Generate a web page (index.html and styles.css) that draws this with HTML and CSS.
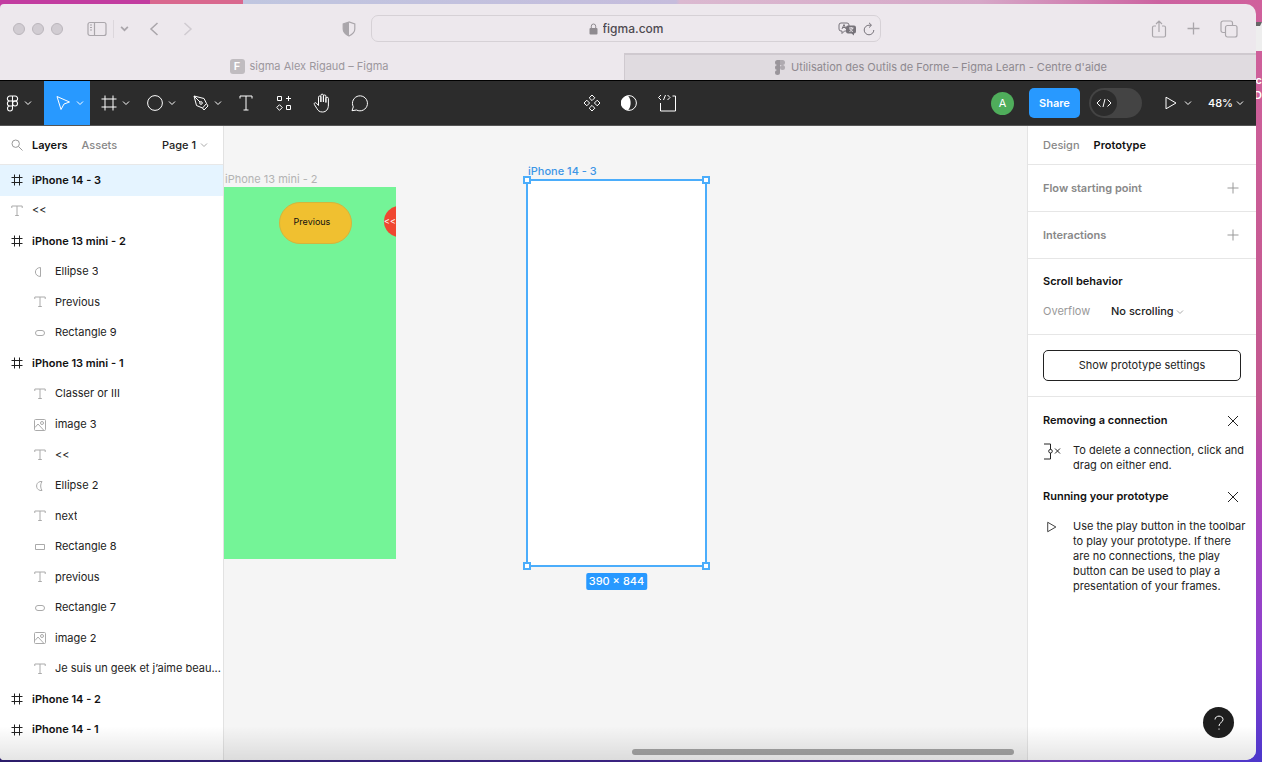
FILE: index.html
```html
<!DOCTYPE html>
<html lang="en">
<head>
<meta charset="utf-8">
<title>sigma Alex Rigaud – Figma</title>
<link rel="stylesheet" href="styles.css">
</head>
<body>
<svg class="sprite" aria-hidden="true">
  <symbol id="chev" viewBox="0 0 8 8"><path d="M1 2.5 4 5.5 7 2.5"/></symbol>
  <symbol id="hash" viewBox="0 0 12 12"><path d="M3.5.5v11M8.5.5v11M.5 3.5h11M.5 8.5h11"/></symbol>
  <symbol id="tee" viewBox="0 0 12 12"><path d="M.8 3V1h10.4v2M6 1v9.5M4.2 10.5h3.6"/></symbol>
  <symbol id="half" viewBox="0 0 12 12"><path d="M6.500 1.500v9C-.3 10.300-.3 1.700 6.500 1.500z"/></symbol>
  <symbol id="moon" viewBox="0 0 12 12"><path d="M8 1.500C.8.800.8 11.200 8 10.500 6.200 7.500 6.200 4.500 8 1.500z"/></symbol>
  <symbol id="rect" viewBox="0 0 12 12"><path d="M1.500 3.500h9v5h-9z"/></symbol>
  <symbol id="round" viewBox="0 0 12 12"><rect x="1.500" y="3.500" width="9" height="5" rx="2.500"/></symbol>
  <symbol id="image" viewBox="0 0 12 12"><rect x=".5" y=".5" width="11" height="11" rx="1"/><circle cx="8" cy="4" r="1.500"/><path d="M1 8.500 4 5l6 6.500"/></symbol>
  <symbol id="plus" viewBox="0 0 12 12"><path d="M6 .5v11M.5 6h11"/></symbol>
  <symbol id="cross" viewBox="0 0 12 12"><path d="M1 1l10 10M11 1 1 11"/></symbol>
  <symbol id="figma" viewBox="0 0 12 16"><path d="M6 1H3.500a2.300 2.300 0 0 0 0 4.700H6zM6 1h2.500a2.300 2.300 0 0 1 0 4.700H6zM6 5.700H3.500a2.300 2.300 0 0 0 0 4.600H6zM3.500 10.300A2.350 2.350 0 1 0 6 12.700v-2.400z"/><circle cx="8.400" cy="8" r="2.300"/></symbol>
  <symbol id="play" viewBox="0 0 12 14"><path d="M1 1.200v11.600L11 7z"/></symbol>
</svg>

<div class="desktop-item" aria-hidden="true"><span class="thumb"></span><span>c</span><span>D</span></div>

<div class="window">
  <header class="titlebar">
    <div class="titlebar-left">
      <div class="lights"><i></i><i></i><i></i></div>
      <button class="bare side" aria-label="Sidebar"><svg width="20" height="16" viewBox="0 0 20 16"><rect x="1" y="1.500" width="18" height="13" rx="2"/><path d="M7.500 1.500v13M3 4h2M3 6.500h2M3 9h2"/></svg></button>
      <button class="bare drop" aria-label="Tab groups"><svg width="9" height="9"><use href="#chev"/></svg></button>
      <button class="bare back" aria-label="Back"><svg width="10" height="16" viewBox="0 0 10 16"><path d="M8.500 2 2 8l6.500 6"/></svg></button>
      <button class="bare fwd" aria-label="Forward"><svg width="10" height="16" viewBox="0 0 10 16"><path d="M1.500 2 8 8l-6.500 6"/></svg></button>
      <button class="bare shield" aria-label="Privacy report"><svg width="14" height="16" viewBox="0 0 14 16"><path d="M7 1 1.200 3v5c0 3.500 2.500 5.500 5.800 7 3.300-1.500 5.800-3.500 5.800-7V3z"/><path class="fill" d="M7 1 1.200 3v5c0 3.500 2.500 5.500 5.800 7z"/></svg></button>
    </div>
    <div class="address">
      <svg class="lock" width="9" height="12" viewBox="0 0 9 12"><rect class="fill" x=".5" y="5" width="8" height="6.500" rx="1"/><path d="M2.300 5V3.200a2.200 2.200 0 0 1 4.400 0V5"/></svg>
      <input class="url" aria-label="Address" value="figma.com">
      <div class="address-actions">
        <button class="bare" aria-label="Translate"><svg width="19" height="14" viewBox="0 0 19 14"><path d="M3 1h6a2 2 0 0 1 2 2v4a2 2 0 0 1-2 2H6.500L4 11.500V9H3a2 2 0 0 1-2-2V3a2 2 0 0 1 2-2zM4 7l2-4.500L8 7M4.700 5.500h2.600"/><path class="fill" d="M10 3.500h6a2 2 0 0 1 2 2v4a2 2 0 0 1-2 2v2l-2.500-2H10a2 2 0 0 1-2-2v-4a2 2 0 0 1 2-2z"/><path class="light" d="M11 6h4.500M13.200 5v1M14.500 6c-.5 2-1.500 3-3 3.500M11.800 7c.8 1.500 2 2.200 3.200 2.500"/></svg></button>
        <button class="bare" aria-label="Reload"><svg width="12" height="14" viewBox="0 0 12 14"><path d="M10.800 8A4.800 4.800 0 1 1 6 3.200h2M6 .8l2.500 2.400L6 5.600"/></svg></button>
      </div>
    </div>
    <div class="titlebar-right">
      <button class="bare" aria-label="Share page"><svg width="16" height="18" viewBox="0 0 16 18"><path d="M5 6H3a1.500 1.500 0 0 0-1.500 1.500v8A1.500 1.500 0 0 0 3 17h10a1.500 1.500 0 0 0 1.500-1.500v-8A1.500 1.500 0 0 0 13 6h-2M8 12V1M5 4l3-3 3 3"/></svg></button>
      <button class="bare" aria-label="New tab"><svg width="13" height="13"><use href="#plus"/></svg></button>
      <button class="bare" aria-label="Tab overview"><svg width="18" height="18" viewBox="0 0 18 18"><rect x="5.500" y="5.500" width="11.500" height="11.500" rx="2"/><path d="M5.500 12.500H3a2 2 0 0 1-2-2V3a2 2 0 0 1 2-2h7.500a2 2 0 0 1 2 2v2.500"/></svg></button>
    </div>
  </header>
  <nav class="tabs" aria-label="Tabs">
    <a href="#" class="tab current"><span class="favicon">F</span>sigma Alex Rigaud – Figma</a>
    <a href="#" class="tab other"><svg class="tab-logo" width="12" height="15" viewBox="0 0 12 15"><path class="fill" d="M6 0H3.500a2.500 2.500 0 0 0 0 5H6zM6 5H3.500a2.500 2.500 0 0 0 0 5H6zM3.500 10A2.500 2.500 0 1 0 6 12.500V10z"/><path class="fill pale" d="M6 0h2.500a2.500 2.500 0 0 1 0 5H6z"/><circle class="fill pale" cx="8.500" cy="7.500" r="2.500"/></svg>Utilisation des Outils de Forme – Figma Learn - Centre d'aide</a>
  </nav>

  <div class="toolbar">
    <div class="tools">
      <button class="tool main" aria-label="Main menu"><svg width="13" height="17"><use href="#figma"/></svg><svg class="caret"><use href="#chev"/></svg></button>
      <button class="tool active" aria-label="Move"><svg width="16" height="16" viewBox="0 0 16 16"><path d="M2 1.500 14.500 7 9 9 6 14.500z"/></svg><svg class="caret"><use href="#chev"/></svg></button>
      <button class="tool" aria-label="Frame"><svg width="16" height="16" viewBox="0 0 16 16"><path d="M4 .5v15M12 .5v15M.5 4h15M.5 12h15"/></svg><svg class="caret"><use href="#chev"/></svg></button>
      <button class="tool" aria-label="Ellipse"><svg width="16" height="16" viewBox="0 0 16 16"><circle cx="8" cy="8" r="7.400"/></svg><svg class="caret"><use href="#chev"/></svg></button>
      <button class="tool" aria-label="Pen"><svg width="16" height="16" viewBox="0 0 16 16"><path d="M1 1l2.500 9.500 6 2.500 4-4.500L11 3.500zM1 1l6 6M9.500 13l1.500 2 4-4-1.500-2.500"/><circle cx="8" cy="8" r="1.300"/></svg><svg class="caret"><use href="#chev"/></svg></button>
      <button class="tool plain" aria-label="Text"><svg width="14" height="16" viewBox="0 0 14 16"><path d="M1 3.500V1h12v2.500M7 1v14M4.500 15h5"/></svg></button>
      <button class="tool plain" aria-label="Resources"><svg width="16" height="16" viewBox="0 0 16 16"><path d="M1.500 1.500h4v4h-4zM10.500 10.500h4v4h-4zM12.500 1v5M10 3.500h5M3.500 9.700l2.800 2.800-2.800 2.800L.7 12.500z"/></svg></button>
      <button class="tool plain" aria-label="Hand"><svg width="18" height="20" viewBox="0 0 18 20"><path d="M5.500 11V4.200a1.200 1.200 0 0 1 2.400 0V9M7.900 9V2.400a1.200 1.200 0 0 1 2.500 0V9M10.400 9V3.200a1.200 1.200 0 0 1 2.500 0V9.500M12.900 9.500V5.500a1.200 1.200 0 0 1 2.500 0V12c0 4-2 7-6 7-3 0-4.500-1.500-5.500-3.500L1.400 11.500c-.7-1.600 1-2.400 2-1.300L5.500 12.500V10"/></svg></button>
      <button class="tool plain" aria-label="Comment"><svg width="18" height="17" viewBox="0 0 18 17"><path d="M1 15.700 2.300 11.800A7.500 7.500 0 1 1 5.500 15z"/></svg></button>
    </div>
    <div class="tools-mid">
      <button class="bare" aria-label="Create component"><svg width="18" height="18" viewBox="0 0 18 18"><path d="M9 1l2.800 2.800L9 6.600 6.200 3.800zM9 11.400l2.800 2.800L9 17l-2.800-2.800zM3.800 6.200 6.600 9l-2.800 2.800L1 9zM14.200 6.200 17 9l-2.800 2.800L11.400 9z"/></svg></button>
      <button class="bare" aria-label="Use as mask"><svg width="16" height="16" viewBox="0 0 16 16"><circle cx="8" cy="8" r="7.400"/><path class="fill" d="M7 .8C10.500 4 10.500 12 7 15.200A7.200 7.200 0 0 1 7 .8z"/></svg></button>
      <button class="bare" aria-label="Dev resources"><svg width="20" height="18" viewBox="0 0 20 18"><path d="M4 1 1.500 3.500 4 6M6.500 6l2-5M10.500 1 13 3.500 10.500 6M3.500 9v8H18.500V2H15.500"/></svg></button>
    </div>
    <div class="tools-right">
      <span class="avatar">A</span>
      <button class="share">Share</button>
      <label class="devmode"><input type="checkbox" role="switch" aria-label="Dev Mode"><span class="knob"><svg width="16" height="10" viewBox="0 0 16 10"><path d="M4.500 1.500 1 5l3.500 3.500M7 9l2-8M11.500 1.500 15 5l-3.500 3.500"/></svg></span></label>
      <button class="bare present" aria-label="Present"><svg width="12" height="14"><use href="#play"/></svg><svg class="caret"><use href="#chev"/></svg></button>
      <button class="bare zoom">48%<svg class="caret"><use href="#chev"/></svg></button>
    </div>
  </div>

  <div class="workspace">
    <aside class="layers">
      <div class="layers-head">
        <button class="bare find" aria-label="Search"><svg width="12" height="12" viewBox="0 0 12 12"><circle cx="4.700" cy="4.700" r="3.700"/><path d="M7.500 7.500 11.500 11.500"/></svg></button>
        <button class="bare strong">Layers</button>
        <button class="bare muted">Assets</button>
        <button class="bare page">Page 1<svg class="caret"><use href="#chev"/></svg></button>
      </div>
      <ul class="layer-list">
        <li class="layer frame selected"><svg><use href="#hash"/></svg><span>iPhone 14 - 3</span></li>
        <li class="layer"><svg><use href="#tee"/></svg><span>&lt;&lt;</span></li>
        <li class="layer frame"><svg><use href="#hash"/></svg><span>iPhone 13 mini - 2</span></li>
        <li class="layer child"><svg><use href="#half"/></svg><span>Ellipse 3</span></li>
        <li class="layer child"><svg><use href="#tee"/></svg><span>Previous</span></li>
        <li class="layer child"><svg><use href="#round"/></svg><span>Rectangle 9</span></li>
        <li class="layer frame"><svg><use href="#hash"/></svg><span>iPhone 13 mini - 1</span></li>
        <li class="layer child"><svg><use href="#tee"/></svg><span>Classer or III</span></li>
        <li class="layer child"><svg><use href="#image"/></svg><span>image 3</span></li>
        <li class="layer child"><svg><use href="#tee"/></svg><span>&lt;&lt;</span></li>
        <li class="layer child"><svg><use href="#moon"/></svg><span>Ellipse 2</span></li>
        <li class="layer child"><svg><use href="#tee"/></svg><span>next</span></li>
        <li class="layer child"><svg><use href="#rect"/></svg><span>Rectangle 8</span></li>
        <li class="layer child"><svg><use href="#tee"/></svg><span>previous</span></li>
        <li class="layer child"><svg><use href="#round"/></svg><span>Rectangle 7</span></li>
        <li class="layer child"><svg><use href="#image"/></svg><span>image 2</span></li>
        <li class="layer child"><svg><use href="#tee"/></svg><span>Je suis un geek et j’aime beau...</span></li>
        <li class="layer frame"><svg><use href="#hash"/></svg><span>iPhone 14 - 2</span></li>
        <li class="layer frame"><svg><use href="#hash"/></svg><span>iPhone 14 - 1</span></li>
      </ul>
    </aside>

    <main class="canvas">
      <span class="art-name art-name-mini">iPhone 13 mini - 2</span>
      <div class="art art-mini">
        <div class="pill">Previous</div>
        <div class="dot">&lt;&lt;</div>
      </div>
      <span class="art-name art-name-selected">iPhone 14 - 3</span>
      <div class="art art-selected"><i class="h tl"></i><i class="h tr"></i><i class="h bl"></i><i class="h br"></i><span class="size">390 × 844</span></div>
      <div class="scroll"></div>
    </main>

    <aside class="props">
      <div class="props-tabs"><button class="bare muted">Design</button><button class="bare strong">Prototype</button></div>
      <section class="row"><h2>Flow starting point</h2><button class="bare" aria-label="Add flow starting point"><svg width="12" height="12"><use href="#plus"/></svg></button></section>
      <section class="row"><h2>Interactions</h2><button class="bare" aria-label="Add interaction"><svg width="12" height="12"><use href="#plus"/></svg></button></section>
      <section class="behavior">
        <h2 class="dark">Scroll behavior</h2>
        <div class="field"><label for="overflow">Overflow</label><select id="overflow"><option>No scrolling</option></select><svg class="caret"><use href="#chev"/></svg></div>
      </section>
      <section class="settings"><button class="outline">Show prototype settings</button></section>
      <section class="tips">
        <div class="tip-head"><h2 class="dark">Removing a connection</h2><button class="bare" aria-label="Dismiss"><svg width="12" height="12"><use href="#cross"/></svg></button></div>
        <div class="tip"><svg width="18" height="17" viewBox="0 0 18 17"><path d="M1 1h6.500v5.500M7.500 10v6H1M12 5.500l5 5M17 5.500l-5 5"/><circle cx="7.500" cy="8.200" r="1.800"/></svg><p>To delete a connection, click and drag on either end.</p></div>
        <div class="tip-head"><h2 class="dark">Running your prototype</h2><button class="bare" aria-label="Dismiss"><svg width="12" height="12"><use href="#cross"/></svg></button></div>
        <div class="tip"><svg class="tip-play" width="18" height="12" viewBox="-2 0 18 14"><path d="M2 1.500v11L11.500 7z"/></svg><p>Use the play button in the toolbar to play your prototype. If there are no connections, the play button can be used to play a presentation of your frames.</p></div>
      </section>
    </aside>
    <div class="shade"></div>
    <button class="help" aria-label="Help"><svg width="12" height="16" viewBox="0 0 12 16"><path d="M2 4.500C2 0 10 0 10 4.500 10 7.500 6 7.500 6 11M6 13.500v1.200"/></svg></button>
  </div>
</div>
</body>
</html>
```
FILE: styles.css
```css
* { box-sizing: border-box; }

body {
  margin: 0;
  height: 100vh;
  padding: 4px 6px 2px 0;
  overflow: hidden;
  font: 11px/15px Inter, "Liberation Sans", sans-serif;
  color: #222;
  background:
    linear-gradient(90deg, #c23ca0 0 150px, #d9688e 150px 243px, #c0c6e0 243px, #c5bcdc 676px, #dbb9d0 680px, #d6a8c8 980px, #cc62a0 1160px, #d0609c) top / 100% 12px no-repeat,
    linear-gradient(90deg, #2b1c6a, #3a2380 50%, #6c3bb0 85%, #4d37cc) bottom / 100% 12px no-repeat,
    linear-gradient(#d0609c, #c3588f 400px, #b94aa6 450px, #a943bd 520px, #8a40d0 660px, #4d37cc);
}

button, input, select { font: inherit; color: inherit; margin: 0; }
svg { fill: none; stroke: currentColor; flex: none; display: block; }
.fill { fill: currentColor; stroke: none; }
.sprite { position: absolute; width: 0; height: 0; }
.caret { width: 8px; height: 8px; }
.bare { display: flex; align-items: center; padding: 0; border: 0; background: none; }
.strong { font-weight: 600; color: #111; }
.muted { font-weight: 500; color: #888; }

.desktop-item {
  position: absolute;
  top: 22px;
  right: 0;
  width: 8px;
  display: flex;
  flex-direction: column;
  align-items: flex-end;
  color: #fff;
  font-weight: 600;
}
.thumb { width: 8px; height: 29px; margin-bottom: 22px; background: #eee; border: solid #eee; border-width: 4px 2px; border-top-color: #666; }

.window {
  position: relative;
  height: 100%;
  display: flex;
  flex-direction: column;
  overflow: hidden;
  border-radius: 4px 10px 10px 4px;
  background: #ede8ed;
}

.titlebar {
  flex: none;
  display: grid;
  grid-template-columns: 1fr minmax(0, 510px) 1fr;
  align-items: center;
  height: 49px;
  padding-right: 4px;
  color: #aaa6ab;
}
.titlebar svg { stroke-width: 1.5; }
.titlebar-left { display: flex; align-items: center; padding: 0 15px 0 13px; }
.titlebar-left .bare, .titlebar-right .bare { color: #aaa6ab; }
.lights { display: flex; gap: 7px; }
.lights i { width: 12px; height: 12px; border-radius: 50%; background: #d1ccd2; border: 1px solid #bbb6bc; }
.side { margin-left: 24px; }
.titlebar .side svg { stroke-width: 1.2; }
.drop { height: 18px; margin-left: 6px; padding-left: 6px; border-left: 1px solid #dcd7dc; }
.back { margin-left: 20px; }
.titlebar-left .fwd { margin-left: 24px; color: #d0cbd1; }
.shield { margin-left: auto; }
.titlebar .shield svg { stroke-width: 1.2; }
.address {
  display: grid;
  grid-template-columns: 1fr auto 1fr;
  align-items: center;
  column-gap: 5px;
  height: 27px;
  padding: 0 5px 0 22px;
  border: 1px solid #d6d1d6;
  border-radius: 7px;
}
.lock { justify-self: end; color: #8f8b90; }
.titlebar .lock { stroke-width: 1; }
.url { width: 64px; padding: 0; border: 0; background: none; font-size: 12px; font-weight: 500; color: #4e4a50; }
.address-actions { display: flex; justify-content: flex-end; gap: 6px; color: #77737a; }
.titlebar .address-actions svg { stroke-width: 1; }
.light { stroke: #ede8ed; }
.titlebar-right { display: flex; align-items: center; justify-content: flex-end; gap: 20px; padding-right: 14px; }
.titlebar-right svg { stroke-width: 1.2; }

.tabs { flex: none; display: grid; grid-template-columns: 624fr 632fr; height: 27px; }
.tab { display: flex; align-items: center; justify-content: center; gap: 5px; text-decoration: none; color: #9c979d; white-space: nowrap; }
.current { padding-right: 6px; }
.other { background: #e0dbe0; border-top: 2px solid #cfc9cf; border-left: 1px solid #cfc9cf; color: #8e898f; }
.favicon { width: 15px; height: 15px; border-radius: 3px; background: #c0bcc0; color: #fff; text-align: center; font-weight: 600; }
.tab-logo { color: #9a959b; }
.pale { opacity: .7; }

.toolbar {
  flex: none;
  display: grid;
  grid-template-columns: 1fr auto 1fr;
  height: 46px;
  border-top: 1px solid #000;
  border-bottom: 1px solid #555;
  background: #2c2c2c;
  color: #fff;
}
.tools, .tools-mid, .tools-right { display: flex; align-items: center; }
.tool { width: 46px; height: 44px; padding: 0 6px 0 11px; display: flex; align-items: center; justify-content: space-between; border: 0; background: none; }
.main { width: 44px; padding: 0 12px 0 6px; }
.active { background: #2899ff; }
.plain { width: 38px; padding: 0 2px 0 0; justify-content: center; }
.tools-mid { gap: 20px; padding-left: 4px; }
.tools-right { justify-content: flex-end; padding-right: 12px; }
.avatar { width: 23px; height: 23px; margin-right: 15px; border-radius: 50%; background: #4fad5b; text-align: center; line-height: 23px; }
.share { width: 51px; height: 30px; padding: 0; border: 0; border-radius: 5px; background: #2899ff; font-weight: 600; }
.devmode { width: 53px; height: 30px; margin-left: 9px; padding: 2px; border-radius: 15px; background: #444; }
.devmode input { position: absolute; opacity: 0; }
.knob { width: 26px; height: 26px; display: grid; place-items: center; border-radius: 50%; background: #2c2c2c; }
.present { gap: 7px; margin-left: 23px; }
.zoom { gap: 3px; margin-left: 16px; font-weight: 500; }

.workspace { position: relative; flex: 1; min-height: 0; display: grid; grid-template-columns: 224px minmax(0, 1fr) 229px; }
.layers { display: flex; flex-direction: column; min-height: 0; background: #fff; border-right: 1px solid #e2e2e2; }
.layers-head { flex: none; display: flex; align-items: center; gap: 14px; height: 39px; padding: 0 15px 0 11px; border-bottom: 1px solid #e8e8e8; }
.find { color: #999; margin-right: -5px; }
.page { margin-left: auto; gap: 4px; font-weight: 500; color: #222; }
.page .caret, .field .caret { color: #aaa; }
.layer-list { flex: 1; display: flex; flex-direction: column; margin: 0; padding: 0 0 15px; list-style: none; }
.layer { flex: 1; display: flex; align-items: center; gap: 9px; padding: 0 0 0 11px; }
.layer svg { width: 12px; height: 12px; color: #aaa; }
.layer span { overflow: hidden; text-overflow: ellipsis; white-space: nowrap; }
.frame { font-weight: 600; color: #111; }
.frame svg { color: #222; }
.child { padding-left: 34px; }
.selected { background: #e5f4ff; }

.canvas { position: relative; overflow: hidden; background: #f5f5f5; }
.art-name { position: absolute; white-space: nowrap; }
.art-name-mini { left: 1px; top: 46px; color: #b3b3b3; }
.art-name-selected { left: 304px; top: 38px; color: #3d96e6; font-weight: 500; }
.art { position: absolute; }
.art-mini { left: 0; top: 61px; width: 172px; height: 372px; overflow: hidden; background: #74f497; }
.pill { position: absolute; left: 55px; top: 15px; width: 73px; height: 42px; padding-right: 7px; border: 1px solid #d2b53e; border-radius: 21px; background: #f0c030; text-align: center; font-size: 9px; line-height: 38px; color: #111; }
.dot { position: absolute; left: 160px; top: 19px; width: 31px; height: 31px; border-radius: 50%; background: #f04730; color: #fff; font-size: 9px; line-height: 30px; }
.art-selected { left: 302px; top: 53px; width: 181px; height: 388px; border: 2px solid #4badfb; background: #fff; }
.h { position: absolute; width: 8px; height: 8px; border: 2px solid #4badfb; background: #fff; }
.tl { left: -5px; top: -5px; }
.tr { right: -5px; top: -5px; }
.bl { left: -5px; bottom: -5px; }
.br { right: -5px; bottom: -5px; }
.size { position: absolute; left: 50%; top: 392px; translate: -50% 0; padding: 1px 3px; border-radius: 2px; background: #2899ff; color: #fff; font-weight: 500; white-space: nowrap; }
.scroll { position: absolute; right: 13px; bottom: 5px; width: 382px; height: 6px; border-radius: 3px; background: #a4a4a4; }

.props { background: #fff; border-left: 1px solid #e4e4e4; }
.props h2 { margin: 0; font-size: 11px; font-weight: 600; color: #888; }
.props h2.dark { color: #111; }
.props-tabs { display: flex; gap: 14px; height: 39px; padding: 0 15px; border-bottom: 1px solid #e6e6e6; }
.row { display: flex; align-items: center; justify-content: space-between; height: 47px; padding: 0 17px 0 15px; border-bottom: 1px solid #e6e6e6; }
.row svg { color: #999; }
.behavior { height: 76px; padding: 15px; border-bottom: 1px solid #e6e6e6; }
.field { display: flex; align-items: center; gap: 2px; margin-top: 15px; color: #999; }
.field label { width: 66px; }
.field select { appearance: none; width: 63px; padding: 0; border: 0; background: none; color: #222; font-weight: 500; }
.settings { padding: 15px; border-bottom: 1px solid #e6e6e6; }
.outline { display: block; width: 100%; height: 31px; padding: 0; border: 1px solid #222; border-radius: 5px; background: #fff; }
.tips { padding: 16px 17px 0 15px; }
.tip-head { display: flex; align-items: center; justify-content: space-between; }
.tip { display: flex; gap: 12px; margin: 15px -8px 16px 0; }
.tip p { margin: 0; }
.tip-play { margin-top: 2px; }

.shade { position: absolute; left: 0; right: 0; bottom: 0; height: 34px; pointer-events: none; background: linear-gradient(transparent, rgba(0, 0, 0, .1)); }
.help { position: absolute; right: 22px; bottom: 22px; width: 31px; height: 31px; padding: 0; display: grid; place-items: center; border: 0; border-radius: 50%; background: #1e1e1e; color: #fff; }
```
